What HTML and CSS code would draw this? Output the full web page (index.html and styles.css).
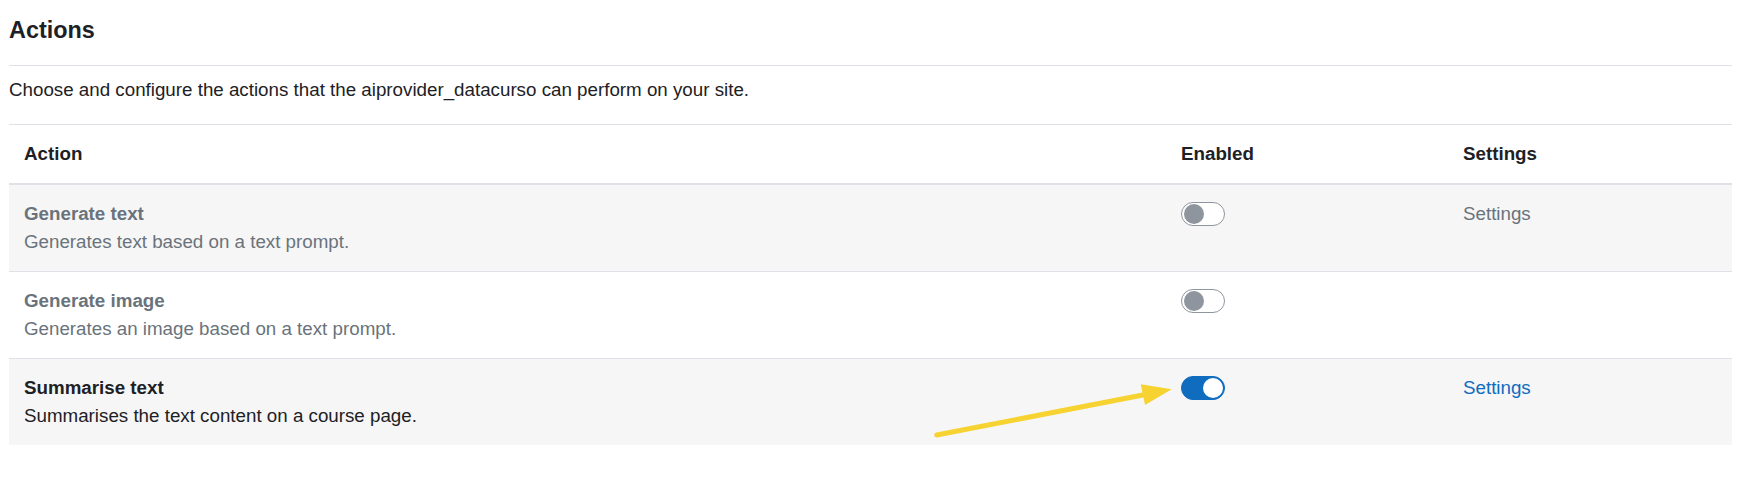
FILE: index.html
```html
<!DOCTYPE html>
<html lang="en">
<head>
<meta charset="utf-8">
<title>Actions</title>
<link rel="stylesheet" href="styles.css">
</head>
<body>
<div class="page">
  <h3 class="title">Actions</h3>
  <hr class="divider">
  <p class="intro">Choose and configure the actions that the aiprovider_datacurso can perform on your site.</p>
  <table class="actions">
    <colgroup>
      <col class="col-action">
      <col class="col-enabled">
      <col class="col-settings">
    </colgroup>
    <thead>
      <tr>
        <th>Action</th>
        <th>Enabled</th>
        <th>Settings</th>
      </tr>
    </thead>
    <tbody>
      <tr class="row striped dim">
        <td>
          <div class="name">Generate text</div>
          <div class="desc">Generates text based on a text prompt.</div>
        </td>
        <td><span class="switch off"><span class="knob"></span></span></td>
        <td><span class="setting">Settings</span></td>
      </tr>
      <tr class="row dim">
        <td>
          <div class="name">Generate image</div>
          <div class="desc">Generates an image based on a text prompt.</div>
        </td>
        <td><span class="switch off"><span class="knob"></span></span></td>
        <td></td>
      </tr>
      <tr class="row striped">
        <td>
          <div class="name">Summarise text</div>
          <div class="desc">Summarises the text content on a course page.</div>
        </td>
        <td><span class="switch on"><span class="knob"></span></span></td>
        <td><a class="setting link" href="#">Settings</a></td>
      </tr>
    </tbody>
  </table>
  <svg class="arrow" width="260" height="70" viewBox="0 0 260 70" aria-hidden="true">
    <line x1="6.7" y1="55" x2="218" y2="14" stroke="#f6d330" stroke-width="5" stroke-linecap="round"/>
    <polygon points="241.7,9.3 210.7,4.3 215,25" fill="#f6d330"/>
  </svg>
</div>
</body>
</html>
```

FILE: styles.css
```css
html, body {
  margin: 0;
  padding: 0;
  background: #ffffff;
}

body {
  font-family: "Liberation Sans", Arial, sans-serif;
  font-size: 18.75px;
  line-height: 1.5;
  color: #1d2125;
}

.page {
  position: relative;
  padding: 0 5px 0 9px;
}

.title {
  margin: 0;
  padding-top: 16px;
  font-size: 23.4px;
  line-height: 28px;
  font-weight: 700;
}

.divider {
  margin: 21px 0 0;
  border: 0;
  border-top: 1px solid #dee2e6;
  height: 0;
}

.intro {
  margin: 10px 0 20px;
  line-height: 28px;
}

.actions {
  width: 100%;
  border-collapse: collapse;
  table-layout: fixed;
}

.col-action { width: 1157px; }
.col-enabled { width: 282px; }
.col-settings { width: auto; }

.actions th,
.actions td {
  padding: 15px;
  text-align: left;
  vertical-align: top;
  border-top: 1px solid #dee2e6;
  line-height: 28px;
}

.actions th {
  font-weight: 700;
  border-bottom: 2px solid #dee2e6;
}

.actions thead + tbody tr:first-child td {
  border-top: 0;
}

.row.striped {
  background: #f6f6f6;
}

.name {
  font-weight: 700;
}

.row.dim .name,
.row.dim .desc,
.row.dim .setting {
  color: #6a737b;
}

.link {
  color: #0f6cbf;
  text-decoration: none;
}

.switch {
  display: inline-block;
  position: relative;
  box-sizing: border-box;
  width: 44px;
  height: 24px;
  border-radius: 12px;
  vertical-align: top;
  margin-top: 2px;
}

.switch .knob {
  position: absolute;
  top: 1px;
  width: 20px;
  height: 20px;
  border-radius: 50%;
}

.switch.off {
  background: #ffffff;
  border: 1px solid #8f959e;
}

.switch.off .knob {
  left: 2px;
  background: #8f959e;
}

.switch.on {
  background: #0f6cbf;
  border: 1px solid #0f6cbf;
}

.switch.on .knob {
  right: 1px;
  background: #ffffff;
}

.arrow {
  position: absolute;
  left: 930px;
  top: 380px;
  overflow: visible;
}
```
